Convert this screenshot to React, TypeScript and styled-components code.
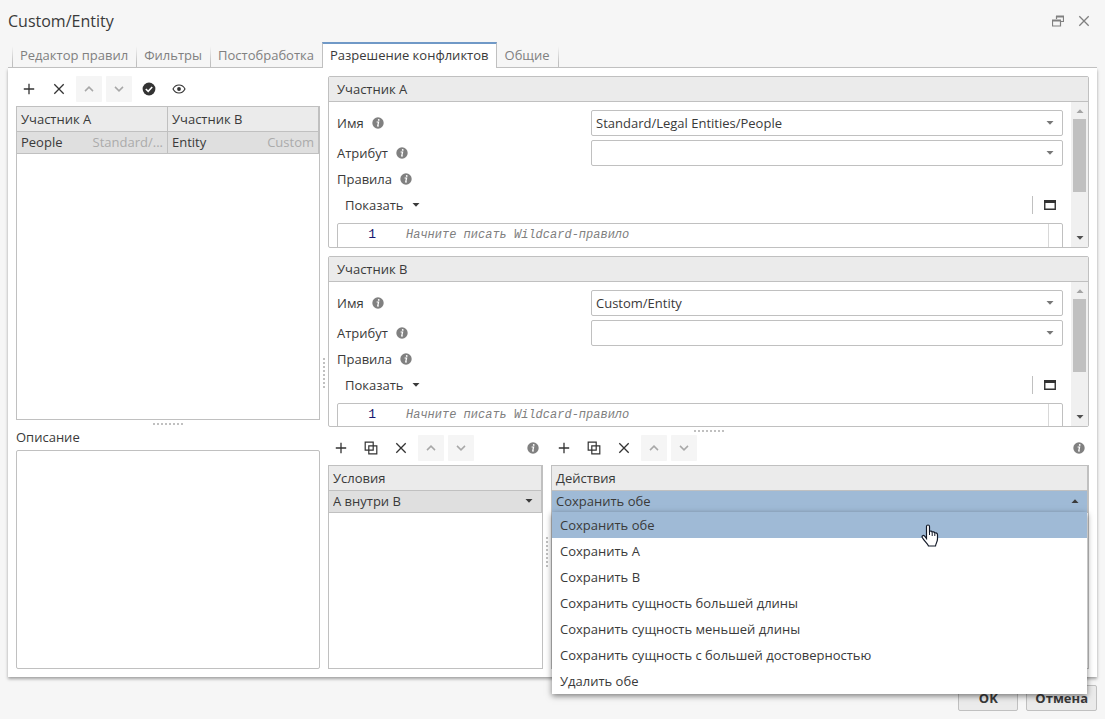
import React from "react";
import styled, { createGlobalStyle } from "styled-components";

const line = "#c0c0c0";
const ink = "#3a3a3a";
const muted = "#808080";
const accent = "#9fbad6";

const GlobalStyle = createGlobalStyle`
  *, *::before, *::after { box-sizing: border-box; }
  body {
    margin: 0;
    background: #f6f6f6;
    color: ${ink};
    font: 13px/18px "Open Sans", "Noto Sans", sans-serif;
  }
  button, select, textarea, input { font: inherit; color: inherit; margin: 0; }
  svg { display: block; flex: none; }
`;

const Dialog = styled.div`
  min-height: 100vh;
  display: flex;
  flex-direction: column;
`;

const TitleBar = styled.header`
  height: 42px;
  flex: none;
  display: flex;
  align-items: center;
  gap: 4px;
  padding: 0 10px 0 8px;
`;

const Title = styled.h1`
  margin: 0;
  flex: 1;
  font-size: 16px;
  line-height: 22px;
  font-weight: 400;
`;

const WindowButton = styled.button`
  width: 22px;
  height: 22px;
  display: grid;
  place-items: center;
  padding: 0;
  border: 0;
  background: none;
  color: ${muted};
`;

const Tabs = styled.nav`
  height: 26px;
  flex: none;
  display: flex;
  align-items: flex-end;
  margin: 0 8px;
  padding-left: 4px;
  border-bottom: 1px solid ${line};
  position: relative;
  z-index: 1;
`;

const Tab = styled.button<{ $active?: boolean; $last?: boolean }>`
  height: ${(p) => (p.$active ? 26 : 25)}px;
  margin-bottom: ${(p) => (p.$active ? -1 : 0)}px;
  padding: ${(p) => (p.$active ? "0 7px 2px" : p.$last ? "0 8px" : "0 8px 0 7px")};
  border: 0 solid ${line};
  border-width: ${(p) => (p.$active ? "2px 1px 0" : p.$last ? "0 1px 0 0" : "0 0 0 1px")};
  ${(p) => p.$active && "border-top-color: #7099c7;"}
  ${(p) => !p.$active && `border-image: linear-gradient(transparent 20%, ${line} 80%) 1;`}
  background: ${(p) => (p.$active ? "#ffffff" : "none")};
  color: ${(p) => (p.$active ? ink : muted)};
`;

const Panel = styled.main`
  flex: 1;
  display: grid;
  grid-template-columns: 304px minmax(0, 1fr);
  margin: 0 8px;
  padding: 8px;
  background: #ffffff;
  box-shadow: 0 2px 3px rgba(0, 0, 0, 0.35);
  column-gap: 8px;
  position: relative;
`;

const Column = styled.section`
  min-width: 0;
  display: flex;
  flex-direction: column;
`;

const HandleY = styled.div`
  height: 8px;
  flex: none;
  display: flex;
  justify-content: center;
  align-items: center;
  &::before {
    content: "";
    width: 30px;
    height: 2px;
    background: repeating-linear-gradient(90deg, ${line} 0 2px, transparent 2px 4px);
  }
`;

const HandleX = styled.div<{ $left: number; $top: number }>`
  position: absolute;
  left: ${(p) => p.$left}px;
  top: ${(p) => p.$top}px;
  width: 2px;
  height: 30px;
  background: repeating-linear-gradient(${line} 0 2px, transparent 2px 4px);
`;

const Toolbar = styled.div`
  height: 26px;
  flex: none;
  display: flex;
  align-items: center;
  gap: 4px;
  margin-bottom: 4px;
`;

const ToolButton = styled.button`
  width: 26px;
  height: 26px;
  flex: none;
  display: grid;
  place-items: center;
  padding: 0;
  border: 0;
  border-radius: 1px;
  background: none;
  color: #333333;
  &:disabled {
    background: #f5f5f5;
    color: #a8a8a8;
  }
`;

const ToolInfo = styled.span`
  margin-left: auto;
  padding-right: 4px;
`;

const GridBox = styled.div`
  flex: 1;
  border: 1px solid ${line};
  background: #ffffff;
`;

const Grid = styled.table`
  width: 100%;
  table-layout: fixed;
  border-collapse: separate;
  border-spacing: 0;
`;

const HeadCell = styled.th`
  height: 25px;
  padding: 0 4px;
  border: 0 solid ${line};
  border-width: 0 1px 1px 0;
  background: #ebebeb;
  font-weight: 400;
  text-align: left;
`;

const Cell = styled.td<{ $hot?: boolean }>`
  height: 22px;
  padding: 0 4px 1px;
  border: 0 solid ${line};
  border-width: 0 1px 1px 0;
  background: ${(p) => (p.$hot ? accent : "#dfdfdf")};
  position: relative;
`;

const CellLine = styled.div`
  display: flex;
  justify-content: space-between;
  line-height: 20px;
`;

const Path = styled.span`
  color: #ababab;
`;

const CellPicker = styled.button`
  width: 100%;
  height: 20px;
  display: flex;
  align-items: center;
  justify-content: space-between;
  padding: 0 4px 0 0;
  border: 0;
  background: none;
`;

const CellSelectBox = styled.div`
  display: flex;
  align-items: center;
  padding-right: 4px;
`;

const CellSelect = styled.select`
  appearance: none;
  flex: 1;
  height: 20px;
  padding: 0;
  border: 0;
  background: none;
`;

const Menu = styled.ul`
  position: absolute;
  z-index: 2;
  top: 21px;
  left: 0;
  right: 0;
  margin: 0;
  padding: 0;
  list-style: none;
  background: #ffffff;
  box-shadow: 0 2px 6px rgba(0, 0, 0, 0.5);
`;

const MenuItem = styled.li<{ $hot?: boolean }>`
  height: 26px;
  padding: 4px 8px;
  background: ${(p) => (p.$hot ? accent : "transparent")};
`;

const Pointer = styled.svg`
  position: absolute;
  z-index: 3;
  left: 369px;
  top: 33px;
`;

const DescriptionLabel = styled.label`
  height: 22px;
  flex: none;
`;

const Description = styled.textarea`
  height: 219px;
  flex: none;
  padding: 4px;
  border: 1px solid ${line};
  border-radius: 2px;
  resize: none;
`;

const Participants = styled.div`
  flex: 1;
  display: flex;
  flex-direction: column;
  gap: 8px;
`;

const ParticipantBox = styled.section`
  flex: 1 1 171px;
  height: 171px;
  display: flex;
  flex-direction: column;
  border: 1px solid ${line};
  border-radius: 2px;
`;

const ParticipantTitle = styled.h2`
  height: 25px;
  flex: none;
  margin: 0;
  padding: 3px 8px;
  border-bottom: 1px solid ${line};
  background: #ebebeb;
  font-size: 13px;
  font-weight: 400;
`;

const ParticipantBody = styled.div`
  flex: 1;
  min-height: 0;
  display: flex;
`;

const Form = styled.div`
  flex: 1;
  min-width: 0;
  overflow: hidden;
  display: flex;
  flex-direction: column;
  gap: 4px;
  padding: 8px 8px 0 8px;
`;

const Field = styled.div`
  flex: none;
  display: grid;
  grid-template-columns: 254px minmax(0, 1fr);
  align-items: center;
`;

const FieldLabel = styled.label`
  display: flex;
  align-items: center;
  gap: 8px;
`;

const SelectBox = styled.div`
  height: 26px;
  display: flex;
  align-items: center;
  position: relative;
  color: #777777;
`;

const Select = styled.select`
  appearance: none;
  width: 100%;
  height: 26px;
  padding: 0 24px 0 4px;
  border: 1px solid ${line};
  border-radius: 2px;
  background: #ffffff;
  color: ${ink};
`;

const SelectArrow = styled.span`
  position: absolute;
  right: 9px;
  pointer-events: none;
`;

const RuleLabel = styled(FieldLabel)`
  height: 18px;
  flex: none;
`;

const RuleBar = styled.div`
  height: 27px;
  flex: none;
  display: flex;
  align-items: center;
  justify-content: space-between;
  padding-bottom: 1px;
`;

const ShowButton = styled.button`
  display: flex;
  align-items: center;
  gap: 8px;
  padding: 0 8px;
  border: 0;
  background: none;
`;

const ExpandSlot = styled.div`
  height: 18px;
  display: flex;
  align-items: center;
  padding-left: 4px;
  border-left: 1px solid ${line};
`;

const Editor = styled.div`
  height: 120px;
  flex: none;
  display: flex;
  border: 1px solid ${line};
  border-radius: 2px;
  font: 12px/22px "Liberation Mono", monospace;
`;

const LineNumber = styled.span`
  width: 38px;
  flex: none;
  text-align: right;
  color: #191970;
  font-size: 13px;
`;

const Code = styled.textarea`
  flex: 1;
  margin: 0;
  padding: 0 0 0 30px;
  border: 0;
  background: none;
  resize: none;
  &::placeholder {
    color: ${muted};
    opacity: 1;
    font-style: italic;
  }
`;

const EditorRuler = styled.span`
  width: 14px;
  border-left: 1px solid #d8d8d8;
`;

const ScrollTrack = styled.div`
  width: 17px;
  flex: none;
  display: flex;
  flex-direction: column;
  align-items: center;
  padding: 7px 0;
  background: #f0f0f0;
`;

const ScrollThumb = styled.div`
  width: 13px;
  height: 73px;
  margin: 6px 0 auto;
  background: #c0c0c0;
`;

const Lists = styled.div`
  height: 234px;
  flex: none;
  display: grid;
  grid-template-columns: 215px minmax(0, 1fr);
  gap: 8px;
`;

const Footer = styled.footer`
  height: 42px;
  flex: none;
  display: flex;
  justify-content: flex-end;
  gap: 8px;
  padding: 8px;
`;

const FooterButton = styled.button`
  height: 26px;
  min-width: 60px;
  padding: 0 8px;
  border: 1px solid ${line};
  border-radius: 2px;
  background: #ebebeb;
  font-weight: 700;
`;

const Caret = ({ up, tone = "currentColor" }: { up?: boolean; tone?: string }) => (
  <svg width="8" height="4" viewBox="0 0 8 4" fill={tone} aria-hidden="true">
    <path d={up ? "M.5 4 4 .2 7.500 4z" : "M.5 0h7L4 3.800z"} />
  </svg>
);

const InfoIcon = () => (
  <svg width="12" height="12" viewBox="0 0 12 12" aria-hidden="true">
    <circle cx="6" cy="6" r="5.7" fill="#808080" />
    <path d="M4.600 5h2L5.700 9h1.200" fill="none" stroke="#fff" strokeWidth="1.200" />
    <circle cx="6.700" cy="2.900" r=".9" fill="#fff" />
  </svg>
);

const PlusIcon = () => (
  <svg width="12" height="12" viewBox="0 0 12 12" stroke="currentColor" strokeWidth="1.300" aria-hidden="true">
    <path d="M6 .8v10.400M.8 6h10.400" />
  </svg>
);

const CrossIcon = () => (
  <svg width="12" height="12" viewBox="0 0 12 12" stroke="currentColor" strokeWidth="1.300" aria-hidden="true">
    <path d="M1.300 1.300l9.400 9.400M10.700 1.300l-9.400 9.400" />
  </svg>
);

const ChevronIcon = ({ down }: { down?: boolean }) => (
  <svg width="10" height="6" viewBox="0 0 10 6" fill="none" stroke="currentColor" strokeWidth="1.500" aria-hidden="true">
    <path d={down ? "M1 .9 5 4.900 9 .9" : "M1 5.100 5 1.100 9 5.100"} />
  </svg>
);

const CheckIcon = () => (
  <svg width="14" height="14" viewBox="0 0 14 14" aria-hidden="true">
    <circle cx="7" cy="7" r="6.4" fill="currentColor" />
    <path d="M3.800 7l2.400 2.300 4-4.300" fill="none" stroke="#fff" strokeWidth="1.600" />
  </svg>
);

const EyeIcon = () => (
  <svg width="14" height="10" viewBox="0 0 14 10" fill="none" stroke="currentColor" strokeWidth="1.100" aria-hidden="true">
    <path d="M1 5C3.600-.3 10.400-.3 13 5 10.400 10.300 3.600 10.300 1 5z" />
    <circle cx="7" cy="5" r="1.900" fill="currentColor" stroke="none" />
  </svg>
);

const CopyIcon = () => (
  <svg width="14" height="14" viewBox="0 0 14 14" fill="none" stroke="currentColor" strokeWidth="1.200" aria-hidden="true">
    <path d="M1.200 1.200h8v8h-8zM4.800 4.800h8v8h-8z" />
  </svg>
);

const RestoreIcon = () => (
  <svg width="12" height="12" viewBox="0 0 12 12" fill="none" stroke="currentColor" aria-hidden="true">
    <path d="M4.500 4V1.500h7v5H9M.5 5.500h8v5.500h-8z" strokeWidth="1.200" />
    <path d="M0 5.500h9M4 1.500h8" strokeWidth="2" />
  </svg>
);

const ExpandIcon = () => (
  <svg width="12" height="10" viewBox="0 0 12 10" fill="none" stroke="currentColor" aria-hidden="true">
    <path d="M.750.500h10.500v8.750H.750z" strokeWidth="1.400" />
    <path d="M0 1.500h12" strokeWidth="3" />
  </svg>
);

const HandPointer = () => (
  <Pointer width="18" height="24" viewBox="0 0 18 24" aria-hidden="true">
    <path
      d="M5.500 14.500V2.500c0-2 3-2 3 0v5c1-.900 2.500-.500 2.700.600 1-.600 2.200-.200 2.400.900 1.500-.500 2.900.200 2.900 1.800v4c0 3-1.500 4-2 7.200H7.500c-.500-2-4.500-5-6.200-8.500-.800-1.800 1-2.600 2.200-1.500z"
      fill="#fff"
      stroke="#111827"
      strokeWidth="1.200"
    />
    <path d="M8.500 7v4M11.200 8.500V12M13.800 9.500V12" stroke="#111827" />
  </Pointer>
);

const Participant = ({ id, title, value }: { id: string; title: string; value: string }) => (
  <ParticipantBox>
    <ParticipantTitle>{title}</ParticipantTitle>
    <ParticipantBody>
      <Form>
        <Field>
          <FieldLabel htmlFor={`${id}-name`}>
            Имя <InfoIcon />
          </FieldLabel>
          <SelectBox>
            <Select id={`${id}-name`} defaultValue={value}>
              <option>{value}</option>
            </Select>
            <SelectArrow>
              <Caret />
            </SelectArrow>
          </SelectBox>
        </Field>
        <Field>
          <FieldLabel htmlFor={`${id}-attribute`}>
            Атрибут <InfoIcon />
          </FieldLabel>
          <SelectBox>
            <Select id={`${id}-attribute`} defaultValue="">
              <option value="" />
            </Select>
            <SelectArrow>
              <Caret />
            </SelectArrow>
          </SelectBox>
        </Field>
        <RuleLabel htmlFor={`${id}-rules`}>
          Правила <InfoIcon />
        </RuleLabel>
        <RuleBar>
          <ShowButton type="button">
            Показать <Caret />
          </ShowButton>
          <ExpandSlot>
            <ToolButton type="button" aria-label="Развернуть">
              <ExpandIcon />
            </ToolButton>
          </ExpandSlot>
        </RuleBar>
        <Editor>
          <LineNumber>1</LineNumber>
          <Code id={`${id}-rules`} placeholder="Начните писать Wildcard-правило" />
          <EditorRuler />
        </Editor>
      </Form>
      <ScrollTrack>
        <Caret up tone="#a3a3a3" />
        <ScrollThumb />
        <Caret tone="#505050" />
      </ScrollTrack>
    </ParticipantBody>
  </ParticipantBox>
);

const MoveButtons = () => (
  <>
    <ToolButton type="button" aria-label="Вверх" disabled>
      <ChevronIcon />
    </ToolButton>
    <ToolButton type="button" aria-label="Вниз" disabled>
      <ChevronIcon down />
    </ToolButton>
  </>
);

const ListToolbar = () => (
  <Toolbar>
    <ToolButton type="button" aria-label="Добавить">
      <PlusIcon />
    </ToolButton>
    <ToolButton type="button" aria-label="Копировать">
      <CopyIcon />
    </ToolButton>
    <ToolButton type="button" aria-label="Удалить">
      <CrossIcon />
    </ToolButton>
    <MoveButtons />
    <ToolInfo>
      <InfoIcon />
    </ToolInfo>
  </Toolbar>
);

const tabs = ["Редактор правил", "Фильтры", "Постобработка", "Разрешение конфликтов", "Общие"];

const actions = [
  "Сохранить обе",
  "Сохранить A",
  "Сохранить B",
  "Сохранить сущность большей длины",
  "Сохранить сущность меньшей длины",
  "Сохранить сущность с большей достоверностью",
  "Удалить обе",
];

export default function App() {
  return (
    <Dialog>
      <GlobalStyle />
      <TitleBar>
        <Title>Custom/Entity</Title>
        <WindowButton type="button" aria-label="Восстановить">
          <RestoreIcon />
        </WindowButton>
        <WindowButton type="button" aria-label="Закрыть">
          <CrossIcon />
        </WindowButton>
      </TitleBar>
      <Tabs>
        {tabs.map((name, i) => (
          <Tab key={name} type="button" $active={i === 3} $last={i === 4}>
            {name}
          </Tab>
        ))}
      </Tabs>
      <Panel>
        <Column>
          <Toolbar>
            <ToolButton type="button" aria-label="Добавить">
              <PlusIcon />
            </ToolButton>
            <ToolButton type="button" aria-label="Удалить">
              <CrossIcon />
            </ToolButton>
            <MoveButtons />
            <ToolButton type="button" aria-label="Включить">
              <CheckIcon />
            </ToolButton>
            <ToolButton type="button" aria-label="Показать">
              <EyeIcon />
            </ToolButton>
          </Toolbar>
          <GridBox>
            <Grid>
              <thead>
                <tr>
                  <HeadCell>Участник A</HeadCell>
                  <HeadCell>Участник B</HeadCell>
                </tr>
              </thead>
              <tbody>
                <tr>
                  <Cell>
                    <CellLine>
                      People <Path>Standard/...</Path>
                    </CellLine>
                  </Cell>
                  <Cell>
                    <CellLine>
                      Entity <Path>Custom</Path>
                    </CellLine>
                  </Cell>
                </tr>
              </tbody>
            </Grid>
          </GridBox>
          <HandleY />
          <DescriptionLabel htmlFor="description">Описание</DescriptionLabel>
          <Description id="description" />
        </Column>
        <Column>
          <Participants>
            <Participant id="a" title="Участник A" value="Standard/Legal Entities/People" />
            <Participant id="b" title="Участник B" value="Custom/Entity" />
          </Participants>
          <HandleY />
          <Lists>
            <Column>
              <ListToolbar />
              <GridBox>
                <Grid>
                  <thead>
                    <tr>
                      <HeadCell>Условия</HeadCell>
                    </tr>
                  </thead>
                  <tbody>
                    <tr>
                      <Cell>
                        <CellSelectBox>
                          <CellSelect aria-label="Условие" defaultValue="А внутри B">
                            <option>А внутри B</option>
                          </CellSelect>
                          <Caret />
                        </CellSelectBox>
                      </Cell>
                    </tr>
                  </tbody>
                </Grid>
              </GridBox>
            </Column>
            <Column>
              <ListToolbar />
              <GridBox>
                <Grid>
                  <thead>
                    <tr>
                      <HeadCell>Действия</HeadCell>
                    </tr>
                  </thead>
                  <tbody>
                    <tr>
                      <Cell $hot>
                        <CellPicker type="button" aria-haspopup="listbox" aria-expanded="true">
                          Сохранить обе <Caret up />
                        </CellPicker>
                        <Menu role="listbox">
                          {actions.map((name, i) => (
                            <MenuItem key={name} role="option" aria-selected={i === 0} $hot={i === 0}>
                              {name}
                            </MenuItem>
                          ))}
                        </Menu>
                        <HandPointer />
                      </Cell>
                    </tr>
                  </tbody>
                </Grid>
              </GridBox>
            </Column>
          </Lists>
        </Column>
        <HandleX $left={315} $top={290} />
        <HandleX $left={538} $top={469} />
      </Panel>
      <Footer>
        <FooterButton type="button">OK</FooterButton>
        <FooterButton type="button">Отмена</FooterButton>
      </Footer>
    </Dialog>
  );
}
